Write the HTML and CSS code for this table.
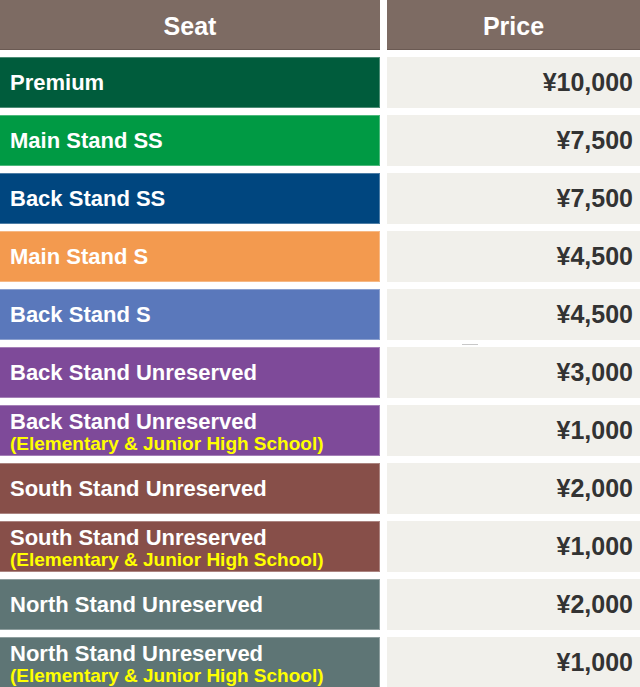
FILE: index.html
```html
<!DOCTYPE html>
<html>
<head>
<meta charset="utf-8">
<link rel="stylesheet" href="styles.css">
</head>
<body>
<div class="table">
  <div class="head">Seat</div>
  <div class="head">Price</div>

  <div class="seat c-premium">Premium</div>
  <div class="price">¥10,000</div>

  <div class="seat c-mainss">Main Stand SS</div>
  <div class="price">¥7,500</div>

  <div class="seat c-backss">Back Stand SS</div>
  <div class="price">¥7,500</div>

  <div class="seat c-mains">Main Stand S</div>
  <div class="price">¥4,500</div>

  <div class="seat c-backs">Back Stand S</div>
  <div class="price">¥4,500</div>

  <div class="seat c-purple">Back Stand Unreserved</div>
  <div class="price mark">¥3,000</div>

  <div class="seat c-purple two"><span class="main">Back Stand Unreserved</span><span class="sub">(Elementary &amp; Junior High School)</span></div>
  <div class="price">¥1,000</div>

  <div class="seat c-brown">South Stand Unreserved</div>
  <div class="price">¥2,000</div>

  <div class="seat c-brown two"><span class="main">South Stand Unreserved</span><span class="sub">(Elementary &amp; Junior High School)</span></div>
  <div class="price">¥1,000</div>

  <div class="seat c-slate">North Stand Unreserved</div>
  <div class="price">¥2,000</div>

  <div class="seat c-slate two"><span class="main">North Stand Unreserved</span><span class="sub">(Elementary &amp; Junior High School)</span></div>
  <div class="price">¥1,000</div>
</div>
</body>
</html>
```

FILE: styles.css
```css
html, body {
  margin: 0;
  padding: 0;
  background: #ffffff;
}
body {
  font-family: "Liberation Sans", Arial, sans-serif;
  font-weight: bold;
  overflow: hidden;
}
.table {
  display: grid;
  grid-template-columns: 380px 1fr;
  grid-template-rows: 50px;
  grid-auto-rows: 51px;
  column-gap: 7px;
  row-gap: 7px;
  width: 640px;
}
.head {
  background: #7d6b63;
  border-bottom: 1px solid #6b5a53;
  box-sizing: border-box;
  color: #ffffff;
  font-size: 25px;
  padding-top: 3px;
  display: flex;
  align-items: center;
  justify-content: center;
}
.seat {
  box-sizing: border-box;
  border: 1px solid rgba(255, 255, 255, 0.3);
  border-left: none;
  color: #ffffff;
  font-size: 22px;
  padding-left: 10px;
  display: flex;
  align-items: center;
}
.seat.two {
  flex-direction: column;
  align-items: flex-start;
  justify-content: center;
  line-height: 1;
  padding-top: 2px;
}
.seat.two .main {
  font-size: 22px;
  line-height: 23px;
}
.seat.two .sub {
  font-size: 19px;
  line-height: 21px;
  color: #ffff00;
}
.price {
  background: #f1f0eb;
  color: #333333;
  font-size: 25px;
  display: flex;
  align-items: center;
  justify-content: flex-end;
  padding-right: 7px;
}
.price.mark {
  position: relative;
}
.price.mark::before {
  content: "";
  position: absolute;
  left: 75px;
  top: -3px;
  width: 16px;
  height: 1px;
  background: #c8c8c8;
}
.c-premium { background: #005c3c; }
.c-mainss { background: #009a44; }
.c-backss { background: #00467f; }
.c-mains { background: #f39a4f; }
.c-backs { background: #5a78bb; }
.c-purple { background: #7e4a99; }
.c-brown { background: #874f49; }
.c-slate { background: #5e7575; }
```
